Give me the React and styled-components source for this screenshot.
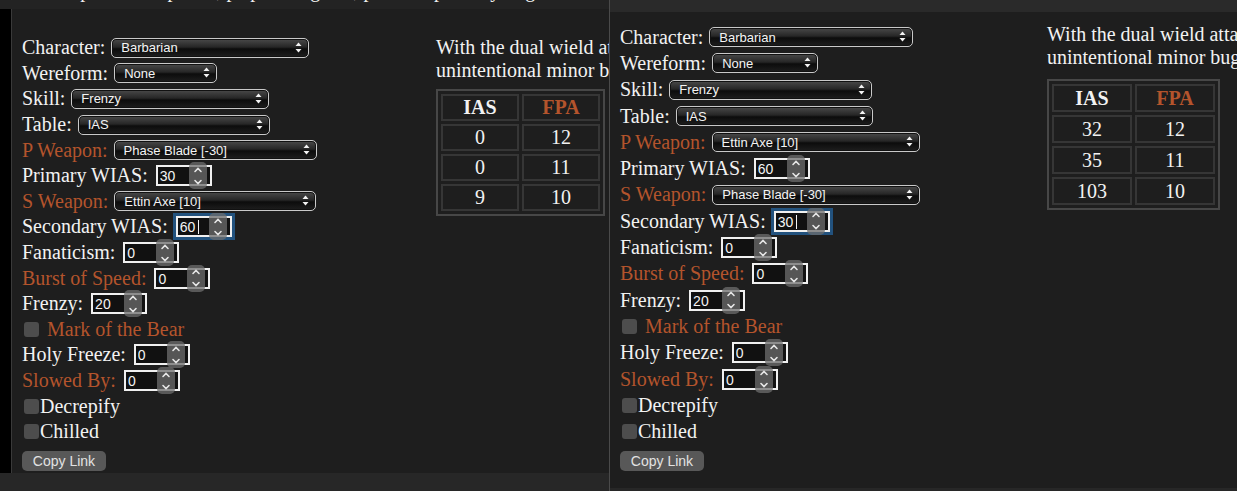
import React from 'react';
import styled, { createGlobalStyle } from 'styled-components';

const ORANGE = '#b4542c';

const GlobalStyle = createGlobalStyle`
  *, *::before, *::after { box-sizing: border-box; }
  html, body {
    margin: 0;
    padding: 0;
    background: #1e1e1e;
  }
  body {
    width: 1237px;
    height: 491px;
    overflow: hidden;
    font-family: "Liberation Serif", "Times New Roman", serif;
  }
`;

// ----- data for the two screenshots
const baseRows = (pWeapon, sWeapon, pWias, sWias, widths) => [
  { type: 'select', label: 'Character:', value: 'Barbarian', w: widths[0] },
  { type: 'select', label: 'Wereform:', value: 'None', w: widths[1] },
  { type: 'select', label: 'Skill:', value: 'Frenzy', w: widths[2] },
  { type: 'select', label: 'Table:', value: 'IAS', w: widths[3] },
  { type: 'select', label: 'P Weapon:', value: pWeapon, w: widths[4], accent: true },
  { type: 'number', label: 'Primary WIAS:', value: pWias },
  { type: 'select', label: 'S Weapon:', value: sWeapon, w: widths[5], accent: true },
  { type: 'number', label: 'Secondary WIAS:', value: sWias, focused: true },
  { type: 'number', label: 'Fanaticism:', value: '0' },
  { type: 'number', label: 'Burst of Speed:', value: '0', accent: true },
  { type: 'number', label: 'Frenzy:', value: '20' },
  { type: 'check', label: 'Mark of the Bear', accent: true, spaced: true },
  { type: 'number', label: 'Holy Freeze:', value: '0' },
  { type: 'number', label: 'Slowed By:', value: '0', accent: true },
  { type: 'check', label: 'Decrepify' },
  { type: 'check', label: 'Chilled' },
];

const shots = [
  {
    id: 'left',
    width: 609,
    gutter: true,
    topH: 9,
    topBg: '#232323',
    bottomH: 18,
    formPad: 26,
    infoPad: 27,
    tableGap: 7,
    rowH: 25.6,
    formW: 414,
    cellW: 78,
    cellH: 27,
    rows: baseRows('Phase Blade [-30]', 'Ettin Axe [10]', '30', '60', [198, 103, 198, 192, 203, 202]),
    table: [
      ['0', '12'],
      ['0', '11'],
      ['9', '10'],
    ],
  },
  {
    id: 'right',
    width: 627,
    gutter: false,
    topH: 12,
    topBg: '#2a2a2a',
    bottomH: 3,
    formPad: 12,
    infoPad: 11,
    tableGap: 10,
    rowH: 26.3,
    formW: 427,
    cellW: 80,
    cellH: 28,
    rows: baseRows('Ettin Axe [10]', 'Phase Blade [-30]', '60', '30', [204, 106, 203, 197, 208, 208]),
    table: [
      ['32', '12'],
      ['35', '11'],
      ['103', '10'],
    ],
  },
];

// ----- small drawings
const UpDown = () => (
  <svg width="7" height="11" viewBox="0 0 7 11">
    <path d="M3.5 0.5 L6.5 4 L0.5 4 Z" fill="#f2f2f2" />
    <path d="M3.5 10.5 L6.5 7 L0.5 7 Z" fill="#f2f2f2" />
  </svg>
);

const Chevrons = () => (
  <svg width="10" height="22" viewBox="0 0 10 22" fill="none" stroke="#e6e6e6" strokeWidth="1.6" strokeLinecap="round">
    <path d="M2 6.5 L5 3.5 L8 6.5" />
    <path d="M2 15.5 L5 18.5 L8 15.5" />
  </svg>
);

// ----- components
const Field = ({ row }) => {
  if (row.type === 'check') {
    return (
      <Row>
        <CheckBox $spaced={row.spaced} />
        <Label $accent={row.accent}>{row.label}</Label>
      </Row>
    );
  }
  return (
    <Row>
      <Label $accent={row.accent}>{row.label}</Label>
      {row.type === 'select' ? (
        <SelectWrap style={{ width: row.w }}>
          <Select defaultValue={row.value}>
            <option>{row.value}</option>
          </Select>
          <Arrow>
            <UpDown />
          </Arrow>
        </SelectWrap>
      ) : (
        <NumberWrap $focused={row.focused}>
          <NumberInput type="text" defaultValue={row.value} />
          {row.focused && <Caret />}
          <Spinner>
            <Chevrons />
          </Spinner>
        </NumberWrap>
      )}
    </Row>
  );
};

const Shot = ({ shot }) => (
  <ShotBox $w={shot.width}>
    <TopBand $h={shot.topH} $bg={shot.topBg}>
      {shot.gutter && <CutText>Some speed breakpoints, pe per the game, please report any bugs</CutText>}
    </TopBand>
    <Body>
      {shot.gutter && <Gutter />}
      <Content $formW={shot.formW}>
        <Form $pad={shot.formPad} $rowH={shot.rowH}>
          {shot.rows.map((r) => (
            <Field key={r.label} row={r} />
          ))}
          <CopyButton>Copy Link</CopyButton>
        </Form>
        <Info $pad={shot.infoPad}>
          <Note>
            <span>With the dual wield attack speed formula, there is an</span>
            <span>unintentional minor bug in the calculation of the frames</span>
          </Note>
          <Table $gap={shot.tableGap}>
            <tbody>
              <tr>
                <HeadCell $w={shot.cellW} $h={shot.cellH}>IAS</HeadCell>
                <HeadCell $w={shot.cellW} $h={shot.cellH} $accent>
                  FPA
                </HeadCell>
              </tr>
              {shot.table.map((r, i) => (
                <tr key={i}>
                  <Cell $w={shot.cellW} $h={shot.cellH}>{r[0]}</Cell>
                  <Cell $w={shot.cellW} $h={shot.cellH}>{r[1]}</Cell>
                </tr>
              ))}
            </tbody>
          </Table>
        </Info>
      </Content>
    </Body>
    <BottomBand $h={shot.bottomH} />
  </ShotBox>
);

const App = () => {
  return (
    <React.Fragment>
      <GlobalStyle />
      <Page>
        <Shot shot={shots[0]} />
        <Divider />
        <Shot shot={shots[1]} />
      </Page>
    </React.Fragment>
  );
};

export default App;

const Page = styled.div`
  display: flex;
  width: 1237px;
  height: 491px;
  overflow: hidden;
`;

const Divider = styled.div`
  width: 1px;
  flex: none;
  background: #4a4a4a;
`;

const ShotBox = styled.div`
  width: ${(p) => p.$w}px;
  flex: none;
  display: flex;
  flex-direction: column;
  overflow: hidden;
  background: #1e1e1e;
`;

const TopBand = styled.div`
  height: ${(p) => p.$h}px;
  flex: none;
  background: ${(p) => p.$bg};
  overflow: hidden;
  display: flex;
  align-items: flex-end;
  padding-left: 22px;
`;

/* only the descenders of a scrolled-off line are still visible */
const CutText = styled.div`
  flex: none;
  font-size: 20px;
  line-height: 20px;
  height: 20px;
  color: #f0f0f0;
  white-space: nowrap;
  margin-bottom: 9px;
`;

const Body = styled.div`
  flex: 1;
  display: flex;
  min-height: 0;
`;

const Gutter = styled.div`
  width: 12px;
  flex: none;
  background: #000;
  border-right: 1px solid #3a3a3a;
`;

const Content = styled.div`
  flex: 1;
  display: grid;
  grid-template-columns: ${(p) => p.$formW}px 1fr;
  padding-left: 10px;
  min-width: 0;
  overflow: hidden;
`;

const Form = styled.div`
  display: flex;
  flex-direction: column;
  padding-top: ${(p) => p.$pad}px;
  & > div {
    height: ${(p) => p.$rowH}px;
  }
`;

const Row = styled.div`
  display: flex;
  align-items: center;
  gap: 5px;
  white-space: nowrap;
`;

const Label = styled.span`
  font-size: 20px;
  color: ${(p) => (p.$accent ? ORANGE : '#f2f2f2')};
`;

const SelectWrap = styled.div`
  position: relative;
  height: 20px;
  flex: none;
  margin-left: 1px;
`;

const Select = styled.select`
  appearance: none;
  width: 100%;
  height: 100%;
  border: 1px solid #c9c9c9;
  border-radius: 5px;
  background: linear-gradient(#4a4a4a 0%, #262626 45%, #0c0c0c 55%, #1e1e1e 100%);
  box-shadow: inset 0 0 0 1px #111;
  color: #f4f4f4;
  font-family: "Liberation Sans", Arial, sans-serif;
  font-size: 13px;
  padding: 0 0 0 9px;
  outline: none;
`;

const Arrow = styled.span`
  position: absolute;
  right: 7px;
  top: 4px;
  display: flex;
  pointer-events: none;
`;

const NumberWrap = styled.div`
  position: relative;
  width: 56px;
  height: 21px;
  flex: none;
  margin-left: 3px;
  border: 2px solid #f0f0f0;
  background: #111;
  box-shadow: ${(p) => (p.$focused ? '0 0 0 3px #22527e' : 'none')};
`;

const NumberInput = styled.input`
  width: 100%;
  height: 100%;
  border: none;
  background: transparent;
  color: #f4f4f4;
  font-family: "Liberation Sans", Arial, sans-serif;
  font-size: 14px;
  padding: 0 0 0 2px;
  outline: none;
`;

const Caret = styled.span`
  position: absolute;
  left: 20px;
  top: 2px;
  width: 1px;
  height: 14px;
  background: #f4f4f4;
`;

const Spinner = styled.span`
  position: absolute;
  right: 3px;
  top: -5px;
  width: 18px;
  height: 27px;
  border-radius: 5px;
  background: rgba(110, 110, 110, 0.75);
  display: flex;
  align-items: center;
  justify-content: center;
`;

const CheckBox = styled.span`
  width: 15px;
  height: 15px;
  flex: none;
  margin-left: 2px;
  margin-right: ${(p) => (p.$spaced ? '3px' : '-4px')};
  border-radius: 3px;
  background: #4d4d4d;
`;

const CopyButton = styled.button`
  align-self: flex-start;
  width: 84px;
  height: 20px;
  margin-top: 6px;
  border: none;
  border-radius: 5px;
  background: #585858;
  color: #e2e2e2;
  font-family: "Liberation Sans", Arial, sans-serif;
  font-size: 14px;
  padding: 0;
`;

const Info = styled.div`
  padding-top: ${(p) => p.$pad}px;
  min-width: 0;
`;

const Note = styled.div`
  display: flex;
  flex-direction: column;
  font-size: 20px;
  line-height: 23px;
  color: #f2f2f2;
  white-space: nowrap;
`;

const Table = styled.table`
  margin-top: ${(p) => p.$gap}px;
  border: 2px solid #474747;
  border-collapse: separate;
  border-spacing: 3px;
`;

const Cell = styled.td`
  width: ${(p) => p.$w}px;
  height: ${(p) => p.$h}px;
  padding: 0;
  border: 2px solid #363636;
  text-align: center;
  font-size: 20px;
  color: #f2f2f2;
`;

const HeadCell = styled(Cell).attrs({ as: 'th' })`
  font-weight: bold;
  color: ${(p) => (p.$accent ? ORANGE : '#f2f2f2')};
`;

const BottomBand = styled.div`
  height: ${(p) => p.$h}px;
  flex: none;
  background: #272727;
`;
